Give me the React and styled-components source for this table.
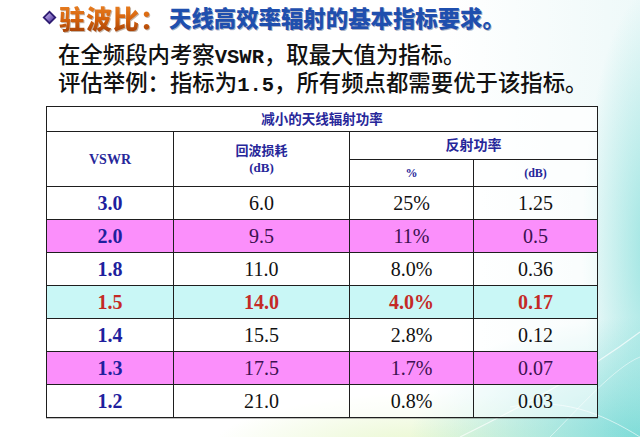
import React from "react";
import styled, { createGlobalStyle } from "styled-components";

const GlobalStyle = createGlobalStyle`
  html, body {
    margin: 0;
    padding: 0;
  }
  body {
    width: 640px;
    height: 437px;
    overflow: hidden;
    font-family: "Noto Sans CJK SC", sans-serif;
  }
`;

// slide background: white with the cyan / pale green glow at the right and bottom
const Slide = styled.div`
  position: relative;
  width: 640px;
  height: 437px;
  box-sizing: border-box;
  padding: 0 0 0 42px;
  overflow: hidden;
  background:
    radial-gradient(ellipse 70px 260px at 652px 250px, rgba(120, 220, 215, 0.7), rgba(160, 235, 230, 0) 100%),
    radial-gradient(ellipse 230px 120px at 640px 437px, rgba(110, 215, 210, 0.85), rgba(150, 230, 225, 0) 100%),
    radial-gradient(ellipse 210px 60px at 420px 452px, rgba(225, 245, 190, 0.8), rgba(240, 250, 220, 0) 100%),
    linear-gradient(90deg, #ffffff 0%, #ffffff 70%, #eef9f9 100%);
`;

const Waves = styled.svg`
  position: absolute;
  right: 0;
  bottom: 0;
  pointer-events: none;
`;

const Content = styled.div`
  position: relative;
  display: flex;
  flex-direction: column;
`;

const TitleRow = styled.div`
  display: flex;
  align-items: center;
  height: 34px;
  gap: 2px;
`;

const Lead = styled.span`
  font-size: 26px;
  font-weight: 900;
  letter-spacing: 1px;
  background: linear-gradient(180deg, #f08a2a 0%, #d5620c 55%, #9a3a06 100%);
  -webkit-background-clip: text;
  background-clip: text;
  color: transparent;
  filter: drop-shadow(1px 1px 0 rgba(90, 40, 0, 0.35));
`;

const TitleText = styled.span`
  font-size: 22.4px;
  font-weight: 900;
  color: #1f4fae;
  text-shadow: 1px 1px 0 rgba(10, 30, 90, 0.35);
`;

const Intro = styled.div`
  margin-top: 5px;
  padding-left: 16px;
  display: flex;
  flex-direction: column;
`;

const Line = styled.div`
  height: 28px;
  font-size: 22.4px;
  line-height: 28px;
  font-weight: 500;
  color: #111;
  white-space: nowrap;
`;

// half-width latin inside the chinese lines
const Latin = styled.span`
  font-family: "Liberation Mono", monospace;
  font-size: 20.5px;
  font-weight: 700;
`;

const Table = styled.table`
  margin: 11px 0 0 4px;
  width: 551px;
  border-collapse: collapse;
  table-layout: fixed;
  border: 1px solid #1e1e1e;
  box-shadow: 0 1px 0 rgba(0, 0, 0, 0.25);
`;

const Head = styled.th`
  border: 1px solid #1e1e1e;
  padding: 0;
  height: ${(p) => p.h}px;
  font-family: "Liberation Serif", "Noto Sans CJK SC", serif;
  font-size: ${(p) => p.size || 13}px;
  font-weight: 700;
  line-height: 17px;
  color: #27279a;
  background: rgba(255, 255, 255, 0.7);
`;

const rowBg = {
  plain: "rgba(255, 255, 255, 0.55)",
  pink: "#fb8ffb",
  cyan: "#c9f7f6",
};

const Row = styled.tr`
  height: 33px;
  background: ${(p) => rowBg[p.tone]};
`;

const Cell = styled.td`
  border: 1px solid #1e1e1e;
  padding: 0;
  text-align: center;
  font-family: "Liberation Serif", serif;
  font-size: 20px;
  font-weight: ${(p) => (p.strong ? 700 : 400)};
  color: ${(p) => p.color};
`;

const Diamond = () => (
  <svg width="15" height="15" viewBox="0 0 15 15">
    <defs>
      <linearGradient id="dg" x1="0" y1="0" x2="1" y2="1">
        <stop offset="0" stopColor="#c9b8f0" />
        <stop offset="1" stopColor="#4a2f9a" />
      </linearGradient>
    </defs>
    <polygon points="7.5,0.5 14.5,7.5 7.5,14.5 0.5,7.5" fill="#2c1a70" />
    <polygon points="7.5,3 12,7.5 7.5,12 3,7.5" fill="url(#dg)" />
  </svg>
);

const rows = [
  { v: "3.0", rl: "6.0", pct: "25%", db: "1.25", tone: "plain" },
  { v: "2.0", rl: "9.5", pct: "11%", db: "0.5", tone: "pink" },
  { v: "1.8", rl: "11.0", pct: "8.0%", db: "0.36", tone: "plain" },
  { v: "1.5", rl: "14.0", pct: "4.0%", db: "0.17", tone: "cyan", mark: true },
  { v: "1.4", rl: "15.5", pct: "2.8%", db: "0.12", tone: "plain" },
  { v: "1.3", rl: "17.5", pct: "1.7%", db: "0.07", tone: "pink" },
  { v: "1.2", rl: "21.0", pct: "0.8%", db: "0.03", tone: "plain" },
];

const App = () => {
  return (
    <Slide>
      <GlobalStyle />
      <Waves width="200" height="200" viewBox="0 0 200 200">
        <path d="M20 200 C 80 170, 140 140, 200 95" stroke="#ffffff" strokeOpacity="0.7" strokeWidth="1.2" fill="none" />
        <path d="M70 170 C 120 160, 160 175, 200 200" stroke="#ffffff" strokeOpacity="0.6" strokeWidth="1" fill="none" />
        <path d="M110 200 C 140 170, 175 130, 200 120" stroke="#ffffff" strokeOpacity="0.5" strokeWidth="1" fill="none" />
      </Waves>
      <Content>
        <TitleRow>
          <Diamond />
          <Lead>驻波比：</Lead>
          <TitleText>天线高效率辐射的基本指标要求。</TitleText>
        </TitleRow>
        <Intro>
          <Line>
            在全频段内考察<Latin>VSWR</Latin>，取最大值为指标。
          </Line>
          <Line>
            评估举例：指标为<Latin>1.5</Latin>，所有频点都需要优于该指标。
          </Line>
        </Intro>
        <Table>
          <colgroup>
            <col style={{ width: 127 }} />
            <col style={{ width: 176 }} />
            <col style={{ width: 124 }} />
            <col style={{ width: 124 }} />
          </colgroup>
          <thead>
            <tr>
              <Head colSpan={4} h={24} size={13.5}>减小的天线辐射功率</Head>
            </tr>
            <tr>
              <Head rowSpan={2} h={27} size={14}>VSWR</Head>
              <Head rowSpan={2} h={27}>
                回波损耗
                <br />
                (dB)
              </Head>
              <Head colSpan={2} h={27} size={14}>反射功率</Head>
            </tr>
            <tr>
              <Head h={26} size={12}>%</Head>
              <Head h={26} size={12}>(dB)</Head>
            </tr>
          </thead>
          <tbody>
            {rows.map((r) => {
              const ink = r.mark ? "#c42a26" : r.tone === "pink" ? "#3c1050" : "#111";
              return (
                <Row key={r.v} tone={r.tone}>
                  <Cell strong color={r.mark ? "#c42a26" : "#1f1f9e"}>{r.v}</Cell>
                  <Cell strong={r.mark} color={ink}>{r.rl}</Cell>
                  <Cell strong={r.mark} color={ink}>{r.pct}</Cell>
                  <Cell strong={r.mark} color={ink}>{r.db}</Cell>
                </Row>
              );
            })}
          </tbody>
        </Table>
      </Content>
    </Slide>
  );
};

export default App;
